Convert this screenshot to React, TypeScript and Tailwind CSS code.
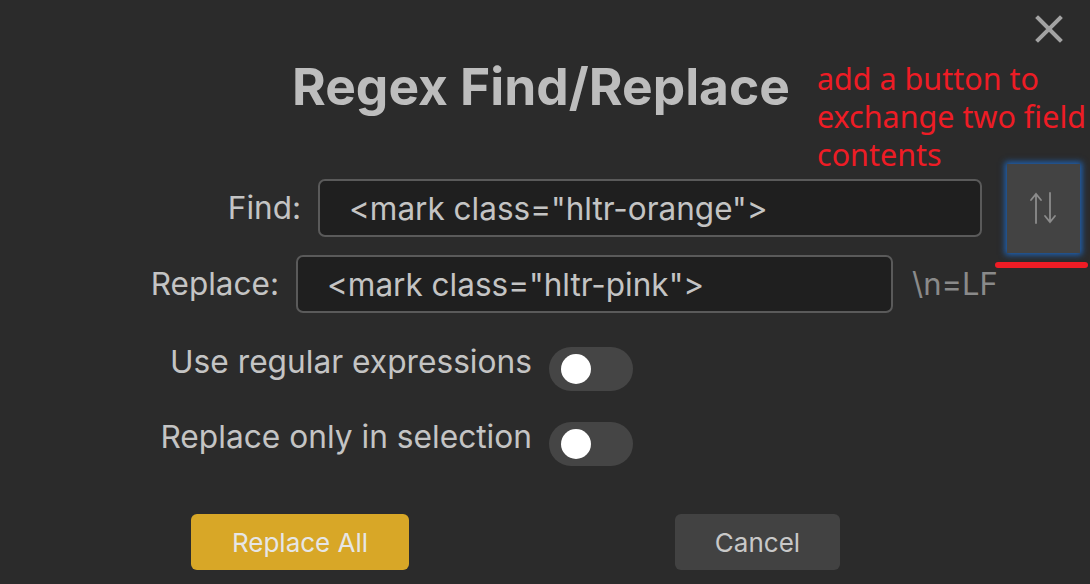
import React, { useState } from 'react';

function Toggle({ on, onClick }: { on: boolean; onClick: () => void }) {
  return (
    <button
      onClick={onClick}
      className={`relative w-[84px] h-[44px] rounded-full shrink-0 ${on ? 'bg-[#7c5fd6]' : 'bg-[#454545]'}`}
    >
      <span
        className={`absolute top-[7px] w-[30px] h-[30px] rounded-full bg-white ${on ? 'left-[42px]' : 'left-[12px]'}`}
      />
    </button>
  );
}

function SwapIcon() {
  return (
    <svg width="30" height="34" viewBox="0 0 30 34" fill="none" stroke="#8c8c8c" strokeWidth="1.8" strokeLinecap="round">
      <path d="M7 32 V3 M2 9 L7 3 L12 9" />
      <path d="M21 2 V31 M16 25 L21 31 L26 25" />
    </svg>
  );
}

export default function App() {
  const [find, setFind] = useState('<mark class="hltr-orange">');
  const [replace, setReplace] = useState('<mark class="hltr-pink">');
  const [regex, setRegex] = useState(false);
  const [selection, setSelection] = useState(false);

  return (
    <div
      className="relative w-[1090px] h-[584px] overflow-hidden bg-[#2b2b2b] text-[#c4c4c4]"
      style={{ fontFamily: 'Inter, "Noto Sans", sans-serif' }}
    >
      {/* close */}
      <button className="absolute left-[1034px] top-[14px]">
        <svg width="30" height="30" viewBox="0 0 30 30" stroke="#a3a3a3" strokeWidth="4" strokeLinecap="square">
          <path d="M4 4 L26 26 M26 4 L4 26" />
        </svg>
      </button>

      {/* annotation overlay */}
      <div
        className="absolute left-[817px] top-[59px] text-[30.5px] leading-[38px] text-[#ee1c25]"
        style={{ fontFamily: '"Noto Sans", sans-serif' }}
      >
        <div>add a button to</div>
        <div className="whitespace-nowrap">exchange two field</div>
        <div>contents</div>
      </div>
      <div className="absolute left-[995px] top-[262px] w-[93px] h-[6px] rounded-full bg-[#ee1c25]" />

      <div className="flex flex-col pt-[54px]">
        <h1 className="w-[1082px] text-center text-[51.5px] leading-[64px] font-bold text-[#bdbdbd]">
          Regex Find/Replace
        </h1>

        {/* Find */}
        <div className="flex items-center h-[58px] mt-[61px]">
          <label className="w-[301px] text-right text-[31.5px]">Find:</label>
          <input
            value={find}
            onChange={(e) => setFind(e.target.value)}
            className="ml-[17px] w-[664px] h-[58px] rounded-[7px] border-2 border-[#5a5a5a] bg-[#1f1f1f] pl-[29px] text-[31.5px] text-[#c4c4c4] outline-none"
          />
          <button
            onClick={() => {
              setFind(replace);
              setReplace(find);
            }}
            className="ml-[25px] w-[73px] h-[89px] flex items-center justify-center bg-[#434343] shadow-[0_0_6px_2px_#1f64b8]"
          >
            <SwapIcon />
          </button>
        </div>

        {/* Replace */}
        <div className="flex items-center h-[58px] mt-[18px]">
          <label className="w-[279px] text-right text-[31.5px]">Replace:</label>
          <input
            value={replace}
            onChange={(e) => setReplace(e.target.value)}
            className="ml-[17px] w-[597px] h-[58px] rounded-[7px] border-2 border-[#5a5a5a] bg-[#1f1f1f] pl-[29px] text-[31.5px] text-[#c4c4c4] outline-none"
          />
          <span className="ml-[19px] text-[31px] text-[#8a8a8a]">\n=LF</span>
        </div>

        {/* toggles */}
        <div className="flex items-center h-[44px] mt-[37px]">
          <span className="w-[532px] text-right text-[31.7px] leading-[32px] pb-[20px]">Use regular expressions</span>
          <div className="ml-[17px]">
            <Toggle on={regex} onClick={() => setRegex(!regex)} />
          </div>
        </div>
        <div className="flex items-center h-[44px] mt-[31px]">
          <span className="w-[532px] text-right text-[31.7px] leading-[32px] pb-[20px]">Replace only in selection</span>
          <div className="ml-[17px]">
            <Toggle on={selection} onClick={() => setSelection(!selection)} />
          </div>
        </div>

        {/* buttons */}
        <div className="flex mt-[45px]">
          <button className="ml-[191px] w-[218px] h-[56px] rounded-[6px] bg-[#d8a727] text-[26px] text-[#e6e6e6]">
            Replace All
          </button>
          <button className="ml-[266px] w-[165px] h-[56px] rounded-[6px] bg-[#424242] text-[26px] text-[#c8c8c8]">
            Cancel
          </button>
        </div>
      </div>
    </div>
  );
}
